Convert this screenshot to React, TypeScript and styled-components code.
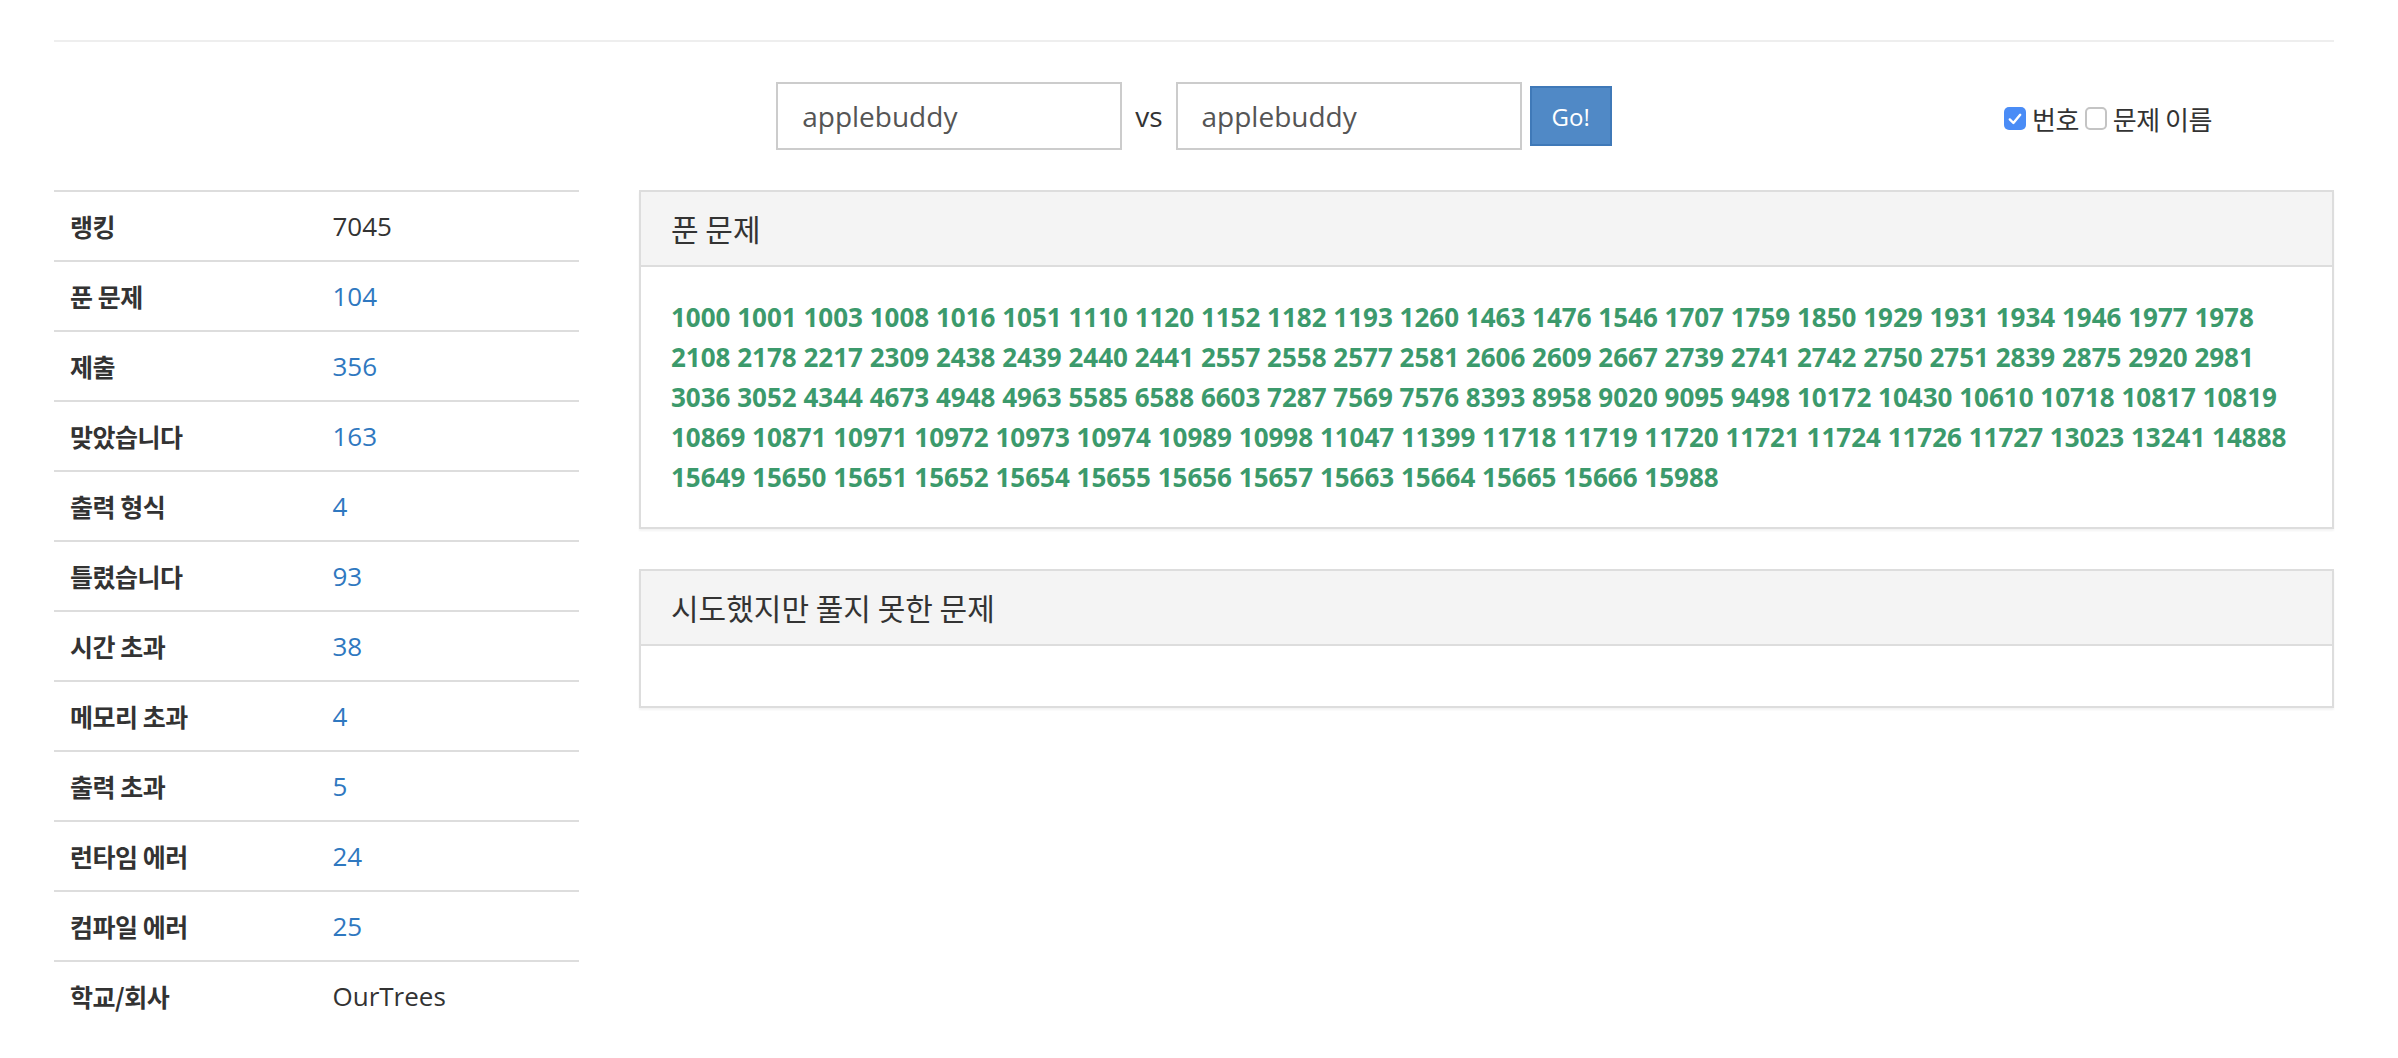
import React from "react";
import styled, { createGlobalStyle } from "styled-components";

const GlobalStyle = createGlobalStyle`
  body {
    margin: 0;
    background: #fff;
    color: #333;
    font-family: "Open Sans", "Noto Sans CJK KR", sans-serif;
  }
`;

const Container = styled.div`
  width: 2280px;
  margin-left: 54px;
  padding-top: 40px;
`;

const Rule = styled.div`
  height: 2px;
  background: #eee;
`;

const SearchRow = styled.div`
  display: grid;
  grid-template-columns: 330px 1fr 330px;
  column-gap: 60px;
  align-items: center;
  margin-top: 40px;
`;

const SearchForm = styled.form`
  grid-column: 2;
  display: flex;
  justify-content: center;
  align-items: center;
  margin: 0;
`;

const UserInput = styled.input`
  box-sizing: border-box;
  width: 346px;
  height: 68px;
  padding: 0 24px;
  border: 2px solid #ccc;
  border-radius: 0;
  font-family: "Open Sans", sans-serif;
  font-size: 28px;
  color: #555;
  outline: none;
`;

const Versus = styled.span`
  margin: 0 13px;
  font-size: 28px;
  color: #333;
`;

const GoButton = styled.button`
  margin-left: 8px;
  height: 60px;
  padding: 0 20px;
  border: 2px solid #3f79b8;
  background: #5089c6;
  color: #fff;
  font-family: "Open Sans", sans-serif;
  font-size: 24px;
  cursor: pointer;
`;

const Options = styled.div`
  grid-column: 3;
  display: flex;
  align-items: center;
  margin-top: 5px;
`;

const Check = styled.span<{ $on?: boolean }>`
  box-sizing: border-box;
  width: 22px;
  height: 23px;
  border-radius: 5px;
  display: inline-flex;
  align-items: center;
  justify-content: center;
  background: ${(p) => (p.$on ? "#4a8cf6" : "#fff")};
  border: ${(p) => (p.$on ? "none" : "2px solid #c4c4c4")};
`;

const OptionLabel = styled.label`
  display: inline-flex;
  align-items: center;
  gap: 6px;
  margin-right: 6px;
  font-family: "Noto Sans CJK KR", sans-serif;
  font-size: 26px;
  letter-spacing: -0.5px;
  color: #333;
`;

const Main = styled.div`
  display: grid;
  grid-template-columns: 525px 1fr;
  column-gap: 60px;
  align-items: start;
  margin-top: 40px;
`;

const StatTable = styled.table`
  width: 100%;
  border-collapse: collapse;
`;

const Cell = styled.td<{ $head?: boolean }>`
  width: 50%;
  padding: 16px;
  border-top: 2px solid #ddd;
  line-height: 36px;
  vertical-align: middle;
  ${(p) =>
    p.$head
      ? `font-family: "Noto Sans CJK KR", sans-serif;
         font-weight: 700;
         font-size: 25px;
         letter-spacing: -0.5px;
         color: #333;`
      : `font-family: "Open Sans", sans-serif;
         font-size: 26px;
         color: #333;`}
`;

const StatLink = styled.a`
  color: #2f78c0;
  text-decoration: none;
`;

const Panels = styled.div`
  display: flex;
  flex-direction: column;
  gap: 40px;
`;

const Panel = styled.section`
  border: 2px solid #ddd;
  background: #fff;
  box-shadow: 0 2px 2px rgba(0, 0, 0, 0.05);
`;

const PanelHeading = styled.div`
  padding: 20px 30px;
  background: #f4f4f4;
  border-bottom: 2px solid #ddd;
`;

const PanelTitle = styled.h3`
  margin: 0;
  font-family: "Noto Sans CJK KR", sans-serif;
  font-weight: 400;
  font-size: 30px;
  line-height: 33px;
  letter-spacing: 0;
  color: #333;
`;

const PanelBody = styled.div`
  padding: 30px;
`;

const ProblemList = styled.div`
  font-family: "Open Sans", sans-serif;
  font-weight: 700;
  font-size: 26px;
  line-height: 40px;
`;

const ProblemLink = styled.a`
  color: #3c9a6c;
  text-decoration: none;
`;

const stats: { label: string; value: string; link?: boolean }[] = [
  { label: "랭킹", value: "7045" },
  { label: "푼 문제", value: "104", link: true },
  { label: "제출", value: "356", link: true },
  { label: "맞았습니다", value: "163", link: true },
  { label: "출력 형식", value: "4", link: true },
  { label: "틀렸습니다", value: "93", link: true },
  { label: "시간 초과", value: "38", link: true },
  { label: "메모리 초과", value: "4", link: true },
  { label: "출력 초과", value: "5", link: true },
  { label: "런타임 에러", value: "24", link: true },
  { label: "컴파일 에러", value: "25", link: true },
  { label: "학교/회사", value: "OurTrees" },
];

const solved = (
  "1000 1001 1003 1008 1016 1051 1110 1120 1152 1182 1193 1260 1463 1476 1546 1707 1759 1850 1929 1931 1934 1946 1977 1978 " +
  "2108 2178 2217 2309 2438 2439 2440 2441 2557 2558 2577 2581 2606 2609 2667 2739 2741 2742 2750 2751 2839 2875 2920 2981 " +
  "3036 3052 4344 4673 4948 4963 5585 6588 6603 7287 7569 7576 8393 8958 9020 9095 9498 10172 10430 10610 10718 10817 10819 " +
  "10869 10871 10971 10972 10973 10974 10989 10998 11047 11399 11718 11719 11720 11721 11724 11726 11727 13023 13241 14888 " +
  "15649 15650 15651 15652 15654 15655 15656 15657 15663 15664 15665 15666 15988"
).split(" ");

function CheckMark() {
  return (
    <svg width="14" height="12" viewBox="0 0 14 12">
      <path d="M1.8 6.4 L5.4 10 L12.2 1.8" fill="none" stroke="#fff" strokeWidth="2.4" strokeLinecap="round" strokeLinejoin="round" />
    </svg>
  );
}

export default function App() {
  return (
    <>
      <GlobalStyle />
      <Container>
        <Rule />
        <SearchRow>
          <SearchForm onSubmit={(e) => e.preventDefault()}>
            <UserInput defaultValue="applebuddy" />
            <Versus>vs</Versus>
            <UserInput defaultValue="applebuddy" />
            <GoButton type="submit">Go!</GoButton>
          </SearchForm>
          <Options>
            <OptionLabel>
              <Check $on>
                <CheckMark />
              </Check>
              번호
            </OptionLabel>
            <OptionLabel>
              <Check />
              문제 이름
            </OptionLabel>
          </Options>
        </SearchRow>
        <Main>
          <StatTable>
            <tbody>
              {stats.map((s) => (
                <tr key={s.label}>
                  <Cell $head>{s.label}</Cell>
                  <Cell>{s.link ? <StatLink href="#">{s.value}</StatLink> : s.value}</Cell>
                </tr>
              ))}
            </tbody>
          </StatTable>
          <Panels>
            <Panel>
              <PanelHeading>
                <PanelTitle>푼 문제</PanelTitle>
              </PanelHeading>
              <PanelBody>
                <ProblemList>
                  {solved.map((n, i) => (
                    <React.Fragment key={n}>
                      <ProblemLink href="#">{n}</ProblemLink>
                      {i < solved.length - 1 ? " " : ""}
                    </React.Fragment>
                  ))}
                </ProblemList>
              </PanelBody>
            </Panel>
            <Panel>
              <PanelHeading>
                <PanelTitle>시도했지만 풀지 못한 문제</PanelTitle>
              </PanelHeading>
              <PanelBody />
            </Panel>
          </Panels>
        </Main>
      </Container>
    </>
  );
}
